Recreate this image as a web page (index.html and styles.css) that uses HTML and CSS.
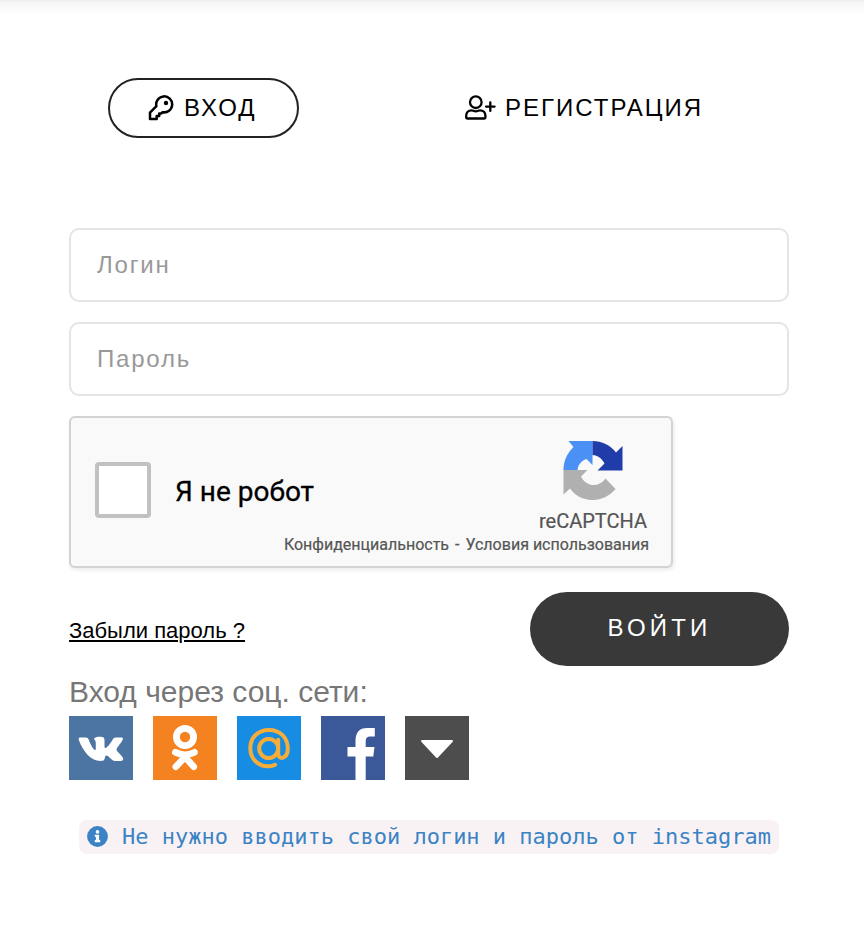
FILE: index.html
```html
<!DOCTYPE html>
<html lang="ru">
<head>
<meta charset="utf-8">
<title>Вход</title>
<link rel="stylesheet" href="styles.css">
</head>
<body>
<div class="topline"></div>
<main class="page">
  <nav class="tabs">
    <a class="tab tab-active">
      <svg class="icon-key" viewBox="0 0 26 26" fill="none" stroke="#000" stroke-width="2.5" stroke-linejoin="round"><path d="M8.400 11.200A8 8 0 1 1 14.600 17.200L13.100 18.600H11.200V21H8.700V24H2V17.600Z"/><circle cx="18" cy="8" r="2.200" fill="#000" stroke="none"/></svg>
      <span>ВХОД</span>
    </a>
    <a class="tab tab-register">
      <svg class="icon-user" viewBox="0 0 31 26" fill="none" stroke="#000" stroke-width="2.300" stroke-linejoin="round" stroke-linecap="round"><circle cx="10.800" cy="7.200" r="5.800"/><path d="M6.600 15.300C8 15.300 8.800 16.300 10.800 16.300S13.600 15.300 15 15.300C18.300 15.300 20.400 17.600 20.400 20.700V22.200Q20.400 23.500 19 23.500H2.600Q1.200 23.500 1.200 22.200V20.700C1.200 17.600 3.300 15.300 6.600 15.300ZM21 11.600H29.600M25.300 7.300V15.900"/></svg>
      <span>РЕГИСТРАЦИЯ</span>
    </a>
  </nav>
  <form class="form">
    <input class="field" type="text" placeholder="Логин">
    <input class="field" type="password" placeholder="Пароль">
    <div class="captcha">
      <div class="captcha-main">
        <span class="checkbox"></span>
        <span class="captcha-label">Я не робот</span>
        <div class="captcha-brand">
          <svg class="captcha-logo" viewBox="0 0 60 60"><path d="M29.500 1V25L23.500 19C18 21 15 25 14.500 30H.5C.5 21 4 13.500 10.500 7L5.500 1Z" fill="#4a90f5"/><path d="M29.500 1C39 1 47 5 53 12.500L59.500 6V30.500H34.500L41.500 23.500C38.500 18 35 15.500 29.500 15Z" fill="#1f3ca8"/><path d="M.5 30H24.500L18 36.500C23 46.500 35 48.500 42.500 38.500L52.500 49C39.500 64.500 17 63 7 48.500L.5 54.500Z" fill="#b0b0b0"/></svg>
          <span class="captcha-name">reCAPTCHA</span>
        </div>
      </div>
      <div class="captcha-links"><span class="privacy">Конфиденциальность</span><span class="dash">-</span><span class="terms">Условия использования</span></div>
    </div>
    <div class="actions">
      <a class="forgot">Забыли пароль ?</a>
      <button class="submit" type="button">ВОЙТИ</button>
    </div>
  </form>
  <p class="social-title">Вход через соц. сети:</p>
  <div class="socials">
    <a class="social vk"><svg viewBox="0 0 64 64"><path d="M10.500 21.500H17Q19 21.500 19.700 23.500C21.500 28.500 24.500 34 26 34C26.700 34 26.800 33.500 26.800 32V27Q26.800 24.500 25 23C25.500 21 29 20.500 32 20.700C35.500 20.900 35.500 22.500 35.500 25V30.500Q35.600 32 36.400 32C38 32 41.500 27.500 44 23Q44.700 21.500 46.500 21.500H52.500Q54.800 21.700 53.500 24.100C51.500 28 47.500 32 47.500 33.800C47.500 35.500 53.500 39.500 54.200 42.800Q54.200 45 51.500 45H46C43 45 39.500 39.500 37.300 39.500C35.300 39.500 36.500 44.800 33.500 44.800C22 46 14.500 36 9.800 24Q9.300 21.800 10.500 21.500Z" fill="#fff"/></svg></a>
    <a class="social ok"><svg viewBox="0 0 64 64" fill="none" stroke="#fff" stroke-linecap="round"><circle cx="32" cy="21" r="8.600" stroke-width="6.800"/><path d="M22.300 36.300Q32 41.300 41.500 36.300" stroke-width="6.600"/><path d="M32 41L22.800 50.800M32 41L40.800 50.800" stroke-width="6.600"/></svg></a>
    <a class="social mail"><svg viewBox="0 0 64 64" fill="none" stroke="#f4ac3b" stroke-width="4" stroke-linecap="round"><circle cx="31.700" cy="32.500" r="9.500"/><path d="M41.200 23.800V37.500C41.200 44.800 50.800 43 50.800 32.500C50.800 21.500 43 13.900 32 13.900S13.300 21.500 13.300 32.200S21.500 51 32 50.300Q35.500 50.200 38 48.800"/></svg></a>
    <a class="social fb"><svg viewBox="0 0 64 64"><path d="M34.500 64V40.500H26.500V31H34.500V25C34.500 16.500 38.500 12 46 12H53.800V20.500H49Q44.700 20.500 44.700 25V31H53.500L52.300 40.500H44.700V64Z" fill="#fff"/></svg></a>
    <a class="social more"><svg viewBox="0 0 64 64"><path d="M17 25H47L32 41Z" fill="#fff" stroke="#fff" stroke-width="2" stroke-linejoin="round"/></svg></a>
  </div>
  <p class="notice">
    <svg class="icon-info" viewBox="0 0 21 21"><circle cx="10.500" cy="10.500" r="10.400" fill="#3b83c4"/><circle cx="10.500" cy="5.900" r="1.800" fill="#fff"/><path d="M7.800 8.800H12.100V14.100H13.200V16.200H7.800V14.100H8.900V10.700H7.800Z" fill="#fff"/></svg>
    <span>Не нужно вводить свой логин и пароль от instagram</span>
  </p>
</main>
</body>
</html>
```
FILE: styles.css
```css
* { box-sizing: border-box; }
body { margin: 0; background: #fff; color: #000; font-family: "Liberation Sans", Arial, sans-serif; }
svg { display: block; flex: none; }
p { margin: 0; }
.topline { height: 14px; background: linear-gradient(#eee 0, #f0f0f0 1px, #f8f8f8 3px, #fafafa 8px, #fdfdfd 11px, #fff 14px); }
.page { width: 720px; margin: 64px 0 0 69px; }
.tabs { display: flex; padding-left: 39px; }
.tab { display: flex; align-items: center; height: 60px; font-size: 24px; letter-spacing: 2px; white-space: nowrap; }
.tab-active { width: 191px; padding-left: 38px; gap: 10px; border: 2px solid #222; border-radius: 30px; }
.tab-register { margin-left: 166px; gap: 9px; }
.icon-key { width: 26px; height: 26px; }
.icon-user { width: 31px; height: 26px; }
.form { margin-top: 90px; }
.field { display: block; width: 720px; height: 74px; margin: 0 0 20px; padding: 0 26px; border: 2px solid #e4e4e4; border-radius: 10px; background: #fff; font: 24px "Liberation Sans", Arial, sans-serif; letter-spacing: 1.8px; outline: none; }
.field::placeholder { color: #999; opacity: 1; }
.captcha { width: 604px; height: 152px; border: 2px solid #d3d3d3; border-radius: 6px; background: #f9f9f9; box-shadow: 1px 2px 3px 1px rgba(0,0,0,.06); font-family: Roboto, sans-serif; }
.captcha-main { display: flex; height: 115px; padding-left: 24px; }
.checkbox { width: 56px; height: 56px; margin-top: 44px; border: 4px solid #c1c1c1; border-radius: 4px; background: #fff; }
.captcha-label { margin: 57px 0 0 24px; font-size: 28px; line-height: 33px; -webkit-text-stroke: .3px #000; }
.captcha-brand { display: flex; flex-direction: column; align-items: center; width: 120px; margin: 22px 18px 0 auto; }
.captcha-logo { width: 60px; height: 60px; }
.captcha-name { margin-top: 9px; color: #555; font-size: 20px; line-height: 24px; -webkit-text-stroke: .2px #555; }
.captcha-links { display: flex; justify-content: flex-end; padding-right: 22px; gap: 6px; color: #555; font-size: 16px; line-height: 24px; white-space: nowrap; -webkit-text-stroke: .2px #555; }
.actions { display: flex; justify-content: space-between; align-items: center; height: 74px; margin-top: 24px; }
.forgot { margin-top: 4px; font-size: 22px; text-decoration: underline; text-underline-offset: 2px; text-decoration-thickness: 2px; }
.submit { width: 259px; height: 74px; padding: 0 0 2px; border: 0; border-radius: 37px; background: #393939; color: #fff; font: 24px "Liberation Sans", Arial, sans-serif; letter-spacing: 4.2px; }
.social-title { height: 50px; padding-top: 8px; color: #777; font-size: 30px; line-height: 36px; }
.socials { display: flex; gap: 20px; }
.social { width: 64px; height: 64px; }
.vk { background: #4d75a3; }
.ok { background: #f58220; }
.mail { background: #168de2; }
.fb { background: #3b5998; }
.more { background: #4d4d4d; }
.notice { display: flex; align-items: center; width: 700px; height: 34px; margin: 40px 0 0 10px; padding: 0 0 2px 8px; gap: 14px; border-radius: 8px; background: #f9f2f4; color: #3b83c4; font: 22px "DejaVu Sans Mono", monospace; white-space: nowrap; }
.icon-info { width: 21px; height: 21px; }
```
